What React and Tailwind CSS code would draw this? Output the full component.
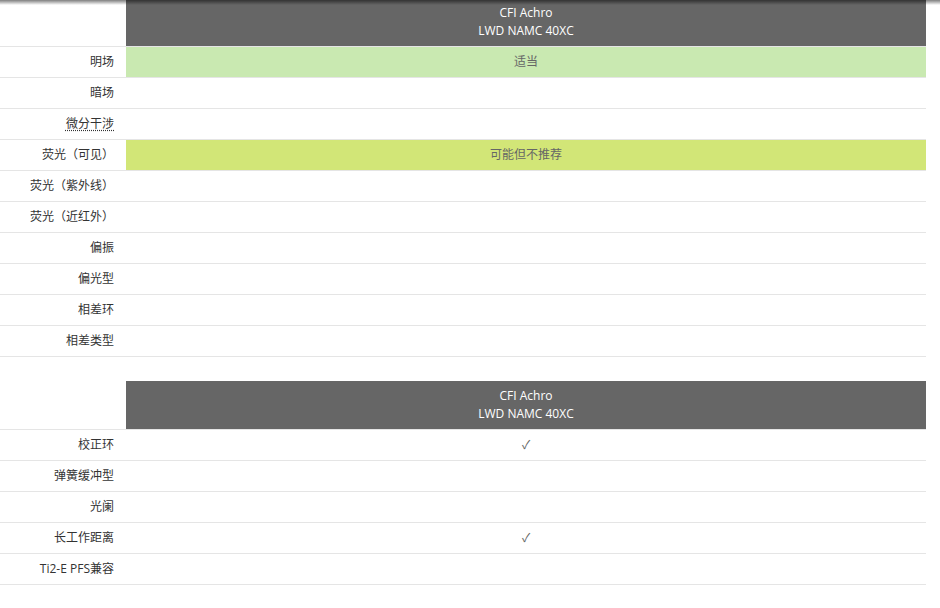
import React from "react";

const font = { fontFamily: '"Open Sans", "Noto Sans CJK SC", sans-serif' };

function Header() {
  return (
    <div className="flex h-[49px] border-b border-[#e5e5e5]">
      <div className="w-[126px] shrink-0 bg-white" />
      <div className="flex-1 bg-[#666666] text-white text-[12px] leading-[18px] flex flex-col items-center justify-center">
        <div>CFI Achro</div>
        <div>LWD NAMC 40XC</div>
      </div>
    </div>
  );
}

function Row({ label, value, bg, abbr }) {
  return (
    <div className="flex h-[31px] border-b border-[#e5e5e5]">
      <div className="w-[126px] shrink-0 pr-[12px] flex items-center justify-end text-[12px] text-[#333]">
        {abbr ? (
          <span className="underline decoration-dotted underline-offset-2">{label}</span>
        ) : (
          label
        )}
      </div>
      <div className={`flex-1 flex items-center justify-center text-[12px] text-[#666] ${bg || ""}`}>
        {value}
      </div>
    </div>
  );
}

export default function App() {
  return (
    <div className="relative w-[940px] h-[608px] bg-white overflow-hidden" style={font}>
      <div className="w-[926px] -mt-[2px]">
        <Header />
        <Row label="明场" value="适当" bg="bg-[#c9e9b1]" />
        <Row label="暗场" />
        <Row label="微分干涉" abbr />
        <Row label="荧光（可见）" value="可能但不推荐" bg="bg-[#d2e677]" />
        <Row label="荧光（紫外线）" />
        <Row label="荧光（近红外）" />
        <Row label="偏振" />
        <Row label="偏光型" />
        <Row label="相差环" />
        <Row label="相差类型" />
        <div className="h-[24px]" />
        <Header />
        <Row label="校正环" value="✓" />
        <Row label="弹簧缓冲型" />
        <Row label="光阑" />
        <Row label="长工作距离" value="✓" />
        <Row label="Ti2-E PFS兼容" />
      </div>
      <div className="absolute left-0 top-0 w-full h-[5px] bg-gradient-to-b from-[rgba(0,0,0,0.5)] to-transparent pointer-events-none" />
    </div>
  );
}
